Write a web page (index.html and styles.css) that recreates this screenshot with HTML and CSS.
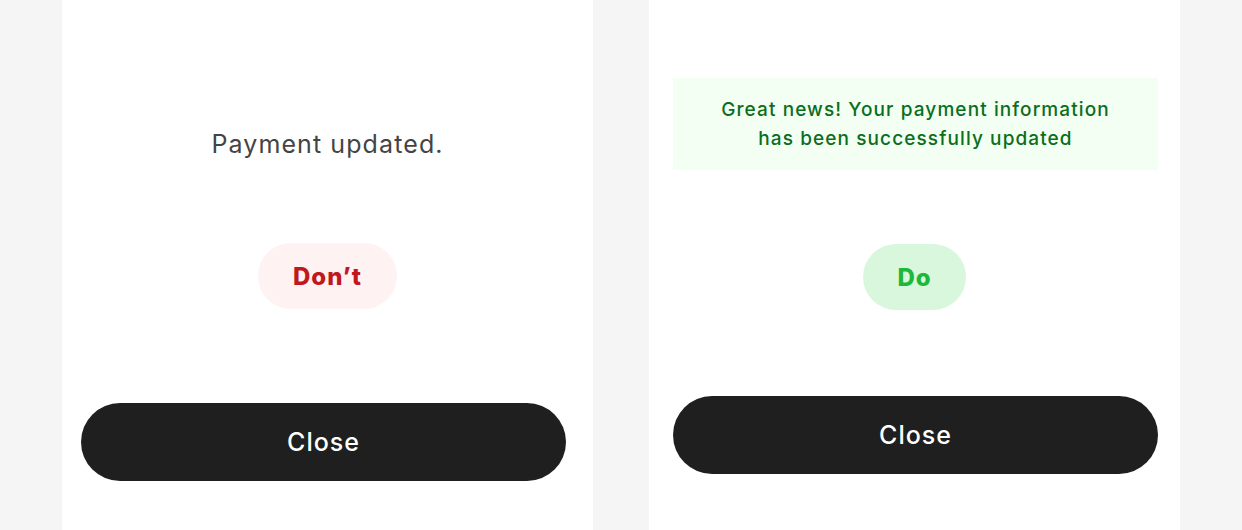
FILE: index.html
```html
<!DOCTYPE html>
<html lang="en">
<head>
    <meta charset="UTF-8">
    <meta name="viewport" content="width=device-width, initial-scale=1.0">
    <title>Payment updated - do and don't</title>
    <link rel="stylesheet" href="styles.css">
</head>
<body>
    <div class="compare">
        <div class="panel panel-dont">
            <p class="plain-message">Payment updated.</p>
            <span class="tag tag-dont">Don’t</span>
            <button class="close-btn">Close</button>
        </div>

        <div class="panel panel-do">
            <div class="success-box">
                Great news! Your payment information<br>
                has been successfully updated
            </div>
            <span class="tag tag-do">Do</span>
            <button class="close-btn">Close</button>
        </div>
    </div>
</body>
</html>
```

FILE: styles.css
```css
body, html {
    margin: 0;
    padding: 0;
    height: 100%;
    overflow: hidden;
    font-family: 'Inter', 'Open Sans', sans-serif;
    background-color: #f5f5f5;
}

.compare {
    display: flex;
    gap: 56px;
    padding: 0 62px;
    height: 100%;
}

.panel {
    width: 531px;
    height: 100%;
    background-color: #FFFFFF;
    display: flex;
    flex-direction: column;
    align-items: center;
}

/* Left: the bad example */
.panel-dont {
    padding-top: 128px;
    box-sizing: border-box;
}

.plain-message {
    margin: 0;
    font-size: 25px;
    line-height: 32px;
    letter-spacing: 1.1px;
    color: #444444;
    font-weight: 400;
}

.tag {
    display: flex;
    align-items: center;
    justify-content: center;
    height: 66px;
    border-radius: 33px;
    font-size: 24px;
    letter-spacing: 1px;
    font-weight: 800;
}

.tag-dont {
    width: 139px;
    margin-top: 83px;
    background-color: #fef2f2;
    color: #c0181c;
}

.tag-do {
    width: 103px;
    margin-top: 74px;
    background-color: #d9f7dc;
    color: #1cb83a;
}

.close-btn {
    width: 485px;
    height: 78px;
    border: none;
    border-radius: 39px;
    background-color: #1f1f1f;
    color: #FFFFFF;
    font-family: inherit;
    font-size: 25px;
    letter-spacing: 1px;
    font-weight: 500;
    cursor: pointer;
}

.panel-dont .close-btn {
    margin-top: 94px;
    margin-right: 8px;
}

/* Right: the good example */
.panel-do {
    padding-top: 78px;
    box-sizing: border-box;
}

.success-box {
    width: 485px;
    height: 92px;
    box-sizing: border-box;
    margin-left: 2px;
    padding-top: 17px;
    background-color: #f3fff3;
    color: #0b6e1b;
    font-size: 19px;
    line-height: 29px;
    letter-spacing: 1.1px;
    font-weight: 500;
    text-align: center;
}

.panel-do .close-btn {
    margin-top: 86px;
    margin-left: 2px;
}
```
